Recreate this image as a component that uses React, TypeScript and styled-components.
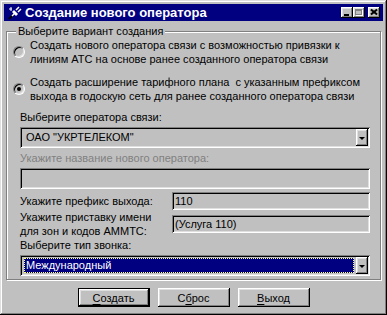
import styled, {createGlobalStyle} from 'styled-components';

const face = '#c0c0c0';
const navy = '#000080';
const shadow = '#808080';
const light = '#dfdfdf';
const dark = '#000';
const white = '#fff';

const font = `"Liberation Sans", Arial, sans-serif`;

const GlobalStyle = createGlobalStyle`
  html, body {
    margin: 0;
    background: ${face};
  }
  * {
    box-sizing: border-box;
  }
`;

const raised = `
  box-shadow: inset -1px -1px ${dark}, inset 1px 1px ${white},
    inset -2px -2px ${shadow}, inset 2px 2px ${light};
`;

const sunken = `
  box-shadow: inset 1px 1px ${shadow}, inset -1px -1px ${white},
    inset 2px 2px ${dark}, inset -2px -2px ${light};
`;

export default function App() {
  return (
    <>
      <GlobalStyle/>
      <Window>
        <TitleBar>
          <TitleIcon/>
          <Title>Создание нового оператора</Title>
          <Captions>
            <CaptionButton><MinGlyph/></CaptionButton>
            <CaptionButton><MaxGlyph/></CaptionButton>
            <CaptionButton $gap><CloseGlyph/></CaptionButton>
          </Captions>
        </TitleBar>

        <Group>
          <Legend>Выберите вариант создания</Legend>
          <RadioRow>
            <Radio/>
            <RadioText>
              Создать нового оператора связи с возможностью привязки к<br/>
              линиям АТС на основе ранее созданного оператора связи
            </RadioText>
          </RadioRow>
          <RadioRow $last>
            <Radio $checked/>
            <RadioText>
              Создать расширение тарифного плана&nbsp; с указанным префиксом<br/>
              выхода в годоскую сеть для ранее созданного оператора связи
            </RadioText>
          </RadioRow>

          <Fields>
            <Label>Выберите оператора связи:</Label>
            <Combo>
              <ComboValue>ОАО "УКРТЕЛЕКОМ"</ComboValue>
              <ArrowButton><Arrow/></ArrowButton>
            </Combo>

            <Label $disabled $mt={3}>Укажите название нового оператора:</Label>
            <TextField $height={21} $mt={3}/>

            <FieldRow $mt={3}>
              <Label>Укажите префикс выхода:</Label>
              <TextField $height={18}>110</TextField>
            </FieldRow>
            <FieldRow>
              <Label>Укажите приставку имени<br/>для зон и кодов АММТС:</Label>
              <TextField $height={18}>(Услуга 110)</TextField>
            </FieldRow>

            <Label>Выберите тип звонка:</Label>
            <Combo>
              <ComboValue $focused>Международный</ComboValue>
              <ArrowButton><Arrow/></ArrowButton>
            </Combo>
          </Fields>
        </Group>

        <ButtonBar>
          <PushButton $default><u>С</u>оздать</PushButton>
          <PushButton>С<u>б</u>рос</PushButton>
          <PushButton><u>В</u>ыход</PushButton>
        </ButtonBar>
      </Window>
    </>
  );
}

function TitleIcon() {
  return (
    <svg width="14" height="14" viewBox="0 0 14 14" style={{flex: 'none'}}>
      <path d="M1 13 L5 9" stroke={dark} strokeWidth="2"/>
      <path d="M4 10 L7 7" stroke={white} strokeWidth="1.5"/>
      <path d="M6 4 L10 8 L8 10 L4 6 Z" fill={white}/>
      <path d="M8 4 L11 1 M10 6 L13 3" stroke={white} strokeWidth="1.5"/>
      <path d="M1 3 L4 3 M3 1 L3 5" stroke={white} strokeWidth="1"/>
    </svg>
  );
}

const Window = styled.div`
  width: 387px;
  height: 315px;
  padding: 4px;
  background: ${face};
  box-shadow: inset -1px -1px ${dark}, inset 1px 1px ${light},
    inset -2px -2px ${shadow}, inset 2px 2px ${white};
  font-family: ${font};
  font-size: 11px;
  color: ${dark};
  display: flex;
  flex-direction: column;
`;

const TitleBar = styled.div`
  height: 17px;
  background: ${navy};
  display: flex;
  align-items: center;
  padding: 0 3px 0 4px;
  gap: 3px;
`;

const Title = styled.div`
  flex: 1;
  color: ${white};
  font-weight: 700;
  font-size: 13px;
  line-height: 17px;
  white-space: nowrap;
`;

const Captions = styled.div`
  display: flex;
  align-items: center;
`;

const CaptionButton = styled.div<{$gap?: boolean}>`
  width: 12px;
  height: 11px;
  margin-left: ${({$gap}) => ($gap ? '3px' : '0')};
  background: ${face};
  ${raised};
  position: relative;
`;

const MinGlyph = styled.span`
  position: absolute;
  left: 3px;
  bottom: 2px;
  width: 5px;
  height: 2px;
  background: ${dark};
`;

const MaxGlyph = styled.span`
  position: absolute;
  left: 2px;
  top: 2px;
  width: 7px;
  height: 6px;
  border: 1px solid ${shadow};
  border-top-width: 2px;
  box-shadow: 1px 1px ${white};
`;

const CloseGlyph = styled.span`
  position: absolute;
  left: 2px;
  top: 2px;
  width: 7px;
  height: 6px;
  &::before, &::after {
    content: '';
    position: absolute;
    left: 0;
    top: 2px;
    width: 8px;
    height: 2px;
    background: ${dark};
    transform: rotate(40deg);
  }
  &::after {
    transform: rotate(-40deg);
  }
`;

const Group = styled.fieldset`
  margin: 3px 2px 0;
  padding: 0 10px 3px 6px;
  border: 1px solid ${shadow};
  box-shadow: inset 1px 1px ${white}, 1px 1px ${white};
  min-width: 0;
`;

const Legend = styled.legend`
  padding: 0 2px;
  margin-left: 3px;
  line-height: 14px;
  background: ${face};
`;

const RadioRow = styled.label<{$last?: boolean}>`
  display: flex;
  align-items: center;
  gap: 5px;
  margin-bottom: ${({$last}) => ($last ? '7px' : '9px')};
`;

const Radio = styled.span<{$checked?: boolean}>`
  flex: none;
  width: 12px;
  height: 12px;
  border-radius: 50%;
  border: 1px solid;
  border-color: ${shadow} ${white} ${white} ${shadow};
  box-shadow: inset 1px 1px ${dark}, inset -1px -1px ${light};
  background: ${face};
  position: relative;
  &::after {
    content: '';
    display: ${({$checked}) => ($checked ? 'block' : 'none')};
    position: absolute;
    left: 3px;
    top: 3px;
    width: 4px;
    height: 4px;
    border-radius: 50%;
    background: ${dark};
  }
`;

const RadioText = styled.span`
  line-height: 14px;
  white-space: nowrap;
`;

const Fields = styled.div`
  margin-left: 7px;
  display: flex;
  flex-direction: column;
`;

const Label = styled.div<{$disabled?: boolean; $mt?: number}>`
  line-height: 14px;
  margin-top: ${({$mt}) => $mt ?? 0}px;
  color: ${({$disabled}) => ($disabled ? shadow : dark)};
  white-space: nowrap;
`;

const FieldRow = styled.div<{$mt?: number}>`
  display: grid;
  grid-template-columns: 152px 1fr;
  align-items: center;
  margin-top: ${({$mt}) => $mt ?? 0}px;
`;

const TextField = styled.div<{$height: number; $mt?: number}>`
  height: ${({$height}) => $height}px;
  margin-top: ${({$mt}) => $mt ?? 0}px;
  background: ${face};
  ${sunken};
  padding: 0 3px;
  line-height: ${({$height}) => $height}px;
  white-space: nowrap;
`;

const Combo = styled.div`
  height: 21px;
  margin-top: 3px;
  background: ${face};
  ${sunken};
  padding: 2px;
  display: flex;
  align-items: stretch;
`;

const ComboValue = styled.div<{$focused?: boolean}>`
  flex: 1;
  margin: 1px 2px;
  padding-left: 2px;
  line-height: 15px;
  white-space: nowrap;
  background: ${({$focused}) => ($focused ? navy : 'transparent')};
  color: ${({$focused}) => ($focused ? white : dark)};
  outline: ${({$focused}) => ($focused ? `1px dotted #ffff80` : 'none')};
  outline-offset: -1px;
`;

const ArrowButton = styled.div`
  width: 12px;
  flex: none;
  background: ${face};
  ${raised};
  display: flex;
  align-items: center;
  justify-content: center;
`;

const Arrow = styled.span`
  width: 0;
  height: 0;
  border-left: 3px solid transparent;
  border-right: 3px solid transparent;
  border-top: 3px solid ${dark};
  margin-top: 1px;
`;

const ButtonBar = styled.div`
  margin-top: 8px;
  display: flex;
  justify-content: center;
  gap: 8px;
`;

const PushButton = styled.button<{$default?: boolean}>`
  width: 72px;
  height: 19px;
  padding: 0;
  border: none;
  background: ${face};
  font-family: ${font};
  font-size: 11px;
  color: ${dark};
  ${({$default}) => $default
    ? `box-shadow: inset 0 0 0 1px ${dark}, inset -2px -2px ${dark}, inset 2px 2px ${white},
        inset -3px -3px ${shadow}, inset 3px 3px ${light};`
    : raised};

  u {
    text-decoration-thickness: 1px;
    text-underline-offset: 2px;
  }
`;
